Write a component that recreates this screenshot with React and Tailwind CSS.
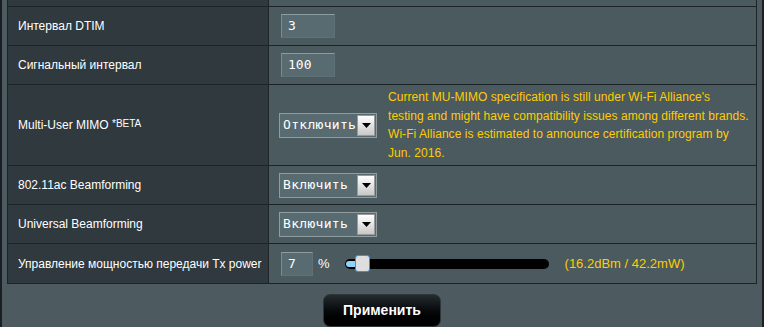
import React from 'react';

const FONT = { fontFamily: '"Liberation Sans", Arial, sans-serif' };
const MONO = { fontFamily: '"DejaVu Sans Mono", "Liberation Mono", monospace' };

const Row = ({ label, h, children }) => (
  <div className={`flex border-b border-[#1c2427] ${h}`}>
    <div className="w-[261px] flex-shrink-0 bg-[#2f393e] border-r border-[#1c2427] flex items-center pl-[10px] text-[12px] text-white">
      {label}
    </div>
    <div className="flex-1 min-w-0 overflow-hidden bg-[#4b5a5f] flex items-center pl-[10px]">{children}</div>
  </div>
);

const TextInput = ({ value, w }) => (
  <div
    className={`${w} h-[24px] ml-[2px] bg-[#586b71] border border-[#5f7076] border-t-[#8d9ca1] border-l-[#7d8c91] flex items-center pl-[6px] text-[13px] text-white`}
    style={MONO}
  >
    {value}
  </div>
);

const Select = ({ value }) => (
  <div className="w-[98px] h-[25px] flex-shrink-0 bg-[#586b71] border border-[#8f9ca0] flex items-center justify-between pl-[3px] pr-[1px]">
    <span className="text-[13px] text-white tracking-[0.3px]" style={MONO}>{value}</span>
    <span className="w-[18px] h-[21px] bg-gradient-to-b from-[#ffffff] to-[#c8c8c8] border border-[#9a9a9a] flex items-center justify-center">
      <svg width="9" height="5" viewBox="0 0 9 5"><path d="M0 0h9L4.5 5z" fill="#000" /></svg>
    </span>
  </div>
);

export default function App() {
  return (
    <div className="w-[764px] h-[327px] bg-[#4d5a5f] flex overflow-hidden" style={FONT}>
      <div className="w-[2px] flex-shrink-0 bg-[#1a1f21]" />
      <div className="flex-1 min-w-0 flex flex-col items-stretch px-[5px]">
        <div className="border-l border-r border-[#1c2427]">
          <Row label="" h="h-[7px]" />
          <Row label="Интервал DTIM" h="h-[39px]">
            <TextInput value="3" w="w-[54px]" />
          </Row>
          <Row label="Сигнальный интервал" h="h-[39px]">
            <TextInput value="100" w="w-[54px]" />
          </Row>
          <Row
            label={
              <span>
                Multi-User MIMO <sup className="text-[10px] relative top-[-2px]">*BETA</sup>
              </span>
            }
            h="h-[81px]"
          >
            <Select value="Отключить" />
            <p className="ml-[11px] text-[12px] tracking-[0.05px] leading-[18.5px] text-[#ffcc00] whitespace-nowrap">
              Current MU-MIMO specification is still under Wi-Fi Alliance's
              <br />
              testing and might have compatibility issues among different brands.
              <br />
              Wi-Fi Alliance is estimated to announce certification program by
              <br />
              Jun. 2016.
            </p>
          </Row>
          <Row label="802.11ac Beamforming" h="h-[39px]">
            <Select value="Включить" />
          </Row>
          <Row label="Universal Beamforming" h="h-[39px]">
            <Select value="Включить" />
          </Row>
          <Row label="Управление мощностью передачи Tx power" h="h-[40px]">
            <TextInput value="7" w="w-[32px]" />
            <span className="ml-[5px] text-[13px] text-white">%</span>
            <div className="relative ml-[15px] w-[204px] h-[10px] flex-shrink-0 rounded-full bg-black">
              <div className="absolute left-[1px] top-[2px] w-[12px] h-[6px] rounded-full bg-[#8fd3f5]" />
              <div className="absolute left-[10px] top-[-4px] w-[15px] h-[17px] rounded-[3px] bg-[#dedede] border border-[#3d8fe3]" />
            </div>
            <span className="ml-[16px] text-[13px] text-[#ffcc00]">(16.2dBm / 42.2mW)</span>
          </Row>
        </div>
        <div className="flex justify-center pt-[10px]">
          <button className="w-[118px] h-[33px] rounded-[7px] border border-[#2e363a] bg-gradient-to-b from-[#252c30] to-[#000000] text-white text-[14px] font-bold [text-shadow:0_1px_1px_#000]">
            Применить
          </button>
        </div>
      </div>
      <div className="w-[2px] flex-shrink-0 bg-[#1a1f21]" />
    </div>
  );
}
